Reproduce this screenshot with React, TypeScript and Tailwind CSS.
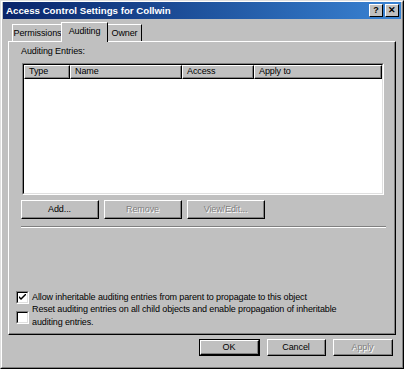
import React from "react";

const font = { fontFamily: '"Liberation Sans", Arial, sans-serif' };

function Btn({ label, disabled, def, w, h = "h-[19px]" }: { label: string; disabled?: boolean; def?: boolean; w: string; h?: string }) {
  return (
    <div className={`${w} ${h} ${def ? "border border-black" : ""} flex`}>
      <div className="flex-1 border-t border-l border-white border-r border-b border-r-black border-b-black flex">
        <div className="flex-1 border-r border-b border-[#808080] flex items-center justify-center">
          <span
            className={`text-[9px] leading-none tracking-[-0.1px] ${disabled ? "text-[#808080] [text-shadow:1px_1px_0_#fff]" : "text-black"}`}
          >
            {label}
          </span>
        </div>
      </div>
    </div>
  );
}

function Check({ checked }: { checked?: boolean }) {
  return (
    <div className="w-[13px] h-[13px] shrink-0 border-t border-l border-[#808080] border-r border-b border-r-white border-b-white flex">
      <div className="flex-1 border-t border-l border-black border-r border-b border-r-[#dfdfdf] border-b-[#dfdfdf] bg-white flex items-center justify-center">
        {checked && (
          <svg width="7" height="7" viewBox="0 0 7 7">
            <path d="M0 2 L0 4 L2 6 L7 1 L7 -1 L2 4 Z" fill="black" />
          </svg>
        )}
      </div>
    </div>
  );
}

export default function App() {
  return (
    <div style={font} className="w-[404px] h-[369px] bg-[#c0c0c0] border-t border-l border-[#dfdfdf] border-r border-b border-r-black border-b-black flex flex-col">
      <div className="flex-1 flex flex-col border-t border-l border-white border-r border-b border-r-[#808080] border-b-[#808080] px-[1px]">
        {/* Title bar */}
        <div className="h-[17px] bg-gradient-to-r from-[#0a246a] to-[#3a84d4] flex items-center pl-[3px] pr-[2px]">
          <span className="text-white font-bold text-[9.7px] leading-none flex-1">Access Control Settings for Collwin</span>
          <div className="flex gap-[2px]">
            {["?", "✕"].map((c) => (
              <div key={c} className="w-[14px] h-[13px] bg-[#c0c0c0] border-t border-l border-white border-r border-b border-r-black border-b-black flex items-center justify-center">
                <span className="text-black font-bold text-[9px] leading-none">{c}</span>
              </div>
            ))}
          </div>
        </div>

        {/* Tabs */}
        <div className="flex items-end pl-[9px] mt-[3px] h-[19px] relative z-10">
          <div className="w-[51px] h-[17px] border-t border-l border-white border-r border-r-black flex items-center justify-center">
            <span className="text-[9px] leading-none tracking-[-0.1px]">Permissions</span>
          </div>
          <div className="w-[47px] h-[20px] -mb-[1px] bg-[#c0c0c0] -ml-[2px] border-t border-l border-white border-r border-r-black flex items-center justify-center">
            <span className="text-[9px] leading-none tracking-[-0.1px] -mt-[3px]">Auditing</span>
          </div>
          <div className="w-[34px] h-[17px] border-t border-white border-r border-r-black flex items-center justify-center">
            <span className="text-[9px] leading-none tracking-[-0.1px]">Owner</span>
          </div>
        </div>

        {/* Panel */}
        <div className="mx-[5px] h-[294px] border-t border-l border-white border-r border-b border-r-black border-b-black flex flex-col">
          <div className="flex-1 border-r border-b border-[#808080] flex flex-col px-[12px]">
            <div className="text-[9px] leading-[10px] tracking-[-0.1px] mt-[4px]">Auditing Entries:</div>
            {/* list */}
            <div className="mt-[7px] ml-[1px] w-[362px] h-[132px] border-t border-l border-[#808080] border-r border-b border-r-white border-b-white flex">
              <div className="flex-1 border-t border-l border-black border-r border-b border-r-[#dfdfdf] border-b-[#dfdfdf] bg-white flex flex-col">
                <div className="flex h-[14px]">
                  {[
                    ["Type", "w-[46px]"],
                    ["Name", "w-[112px]"],
                    ["Access", "w-[72px]"],
                    ["Apply to", "flex-1"],
                  ].map(([t, w]) => (
                    <div key={t} className={`${w} bg-[#c0c0c0] border-t border-l border-white border-r border-b border-r-black border-b-black flex`}>
                      <div className="flex-1 border-r border-b border-[#808080] flex items-center pl-[4px]">
                        <span className="text-[9px] leading-none tracking-[-0.1px]">{t}</span>
                      </div>
                    </div>
                  ))}
                </div>
              </div>
            </div>
            {/* buttons */}
            <div className="flex gap-[5px] mt-[5px]">
              <Btn label="Add..." w="w-[78px]" />
              <Btn label="Remove" w="w-[78px]" disabled />
              <Btn label="View/Edit..." w="w-[78px]" disabled />
            </div>
            {/* separator */}
            <div className="mt-[7px] w-[365px] border-t border-[#808080] border-b border-b-white" />

            <div className="flex items-center gap-[3px] ml-[-5px] mt-[63px]">
              <Check checked />
              <span className="text-[9px] leading-none tracking-[-0.12px]">Allow inheritable auditing entries from parent to propagate to this object</span>
            </div>
            <div className="flex items-start gap-[3px] ml-[-5px] mt-[-1px]">
              <div className="mt-[8px]">
                <Check />
              </div>
              <span className="text-[9px] leading-[13px] tracking-[-0.12px]">
                Reset auditing entries on all child objects and enable propagation of inheritable
                <br />
                auditing entries.
              </span>
            </div>
          </div>
        </div>

        {/* Bottom buttons */}
        <div className="flex justify-end gap-[7px] mt-[4px] pr-[8px]">
          <Btn label="OK" w="w-[61px]" h="h-[17px]" def />
          <Btn label="Cancel" w="w-[59px]" h="h-[17px]" />
          <Btn label="Apply" w="w-[60px]" h="h-[17px]" disabled />
        </div>
      </div>
    </div>
  );
}
